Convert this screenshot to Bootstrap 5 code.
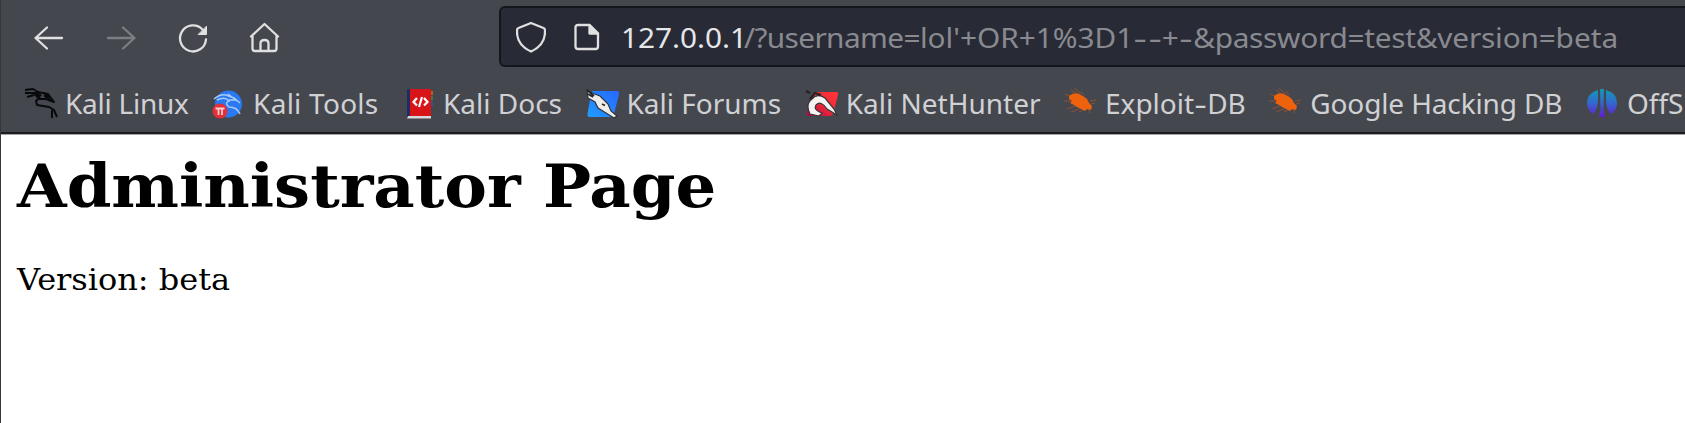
<!DOCTYPE html>
<html lang="en">
<head>
<meta charset="utf-8">
<title>Administrator Page</title>
<link href="https://cdn.jsdelivr.net/npm/bootstrap@5.3.0/dist/css/bootstrap.min.css" rel="stylesheet">
<style>
body{height:423px;overflow:hidden;background:#fff;border-left:1px solid #36373b}
.chrome{background:#45474f;border-bottom:2px solid #1b1c20;box-shadow:0 1px 0 #a5a6a8;font-family:"Noto Sans",sans-serif;font-size:28px;line-height:36px;color:#d0d1d3;height:134px}
.toolbar-row{height:74px;padding-left:28px}
.tool-buttons{gap:32px;padding-top:1px}
.tool-buttons svg{width:40px;height:40px;display:block}
.line-icon{fill:none;stroke:#e0e0e1;stroke-width:2.3;stroke-linecap:round;stroke-linejoin:round}
.address{height:61px;margin-left:214px;margin-top:-1px;background:#282a36;border:2px solid #15161b;border-right:0;border-radius:6px 0 0 6px;padding-left:15px}
.address svg{display:block}
.url{color:#898a90;transform:scaleX(1.063);transform-origin:left;margin-left:21px}
.host{color:#e6e6e9;margin-right:-3px}
.q-user{letter-spacing:-.55px}
.q-pass{letter-spacing:-.25px}
.q-version{letter-spacing:-.15px}
.bookmarks{height:58px;padding-left:23px;gap:23.5px}
.bookmarks svg{width:40px;height:36px;display:block}
.bookmarks span{padding-left:1px}
.dash{display:inline-block;transform:scaleX(1.4);margin:0 2.2px}
.bookmarks .dash{padding:0;margin:0 2px}
.doc{font-family:"DejaVu Serif",serif;color:#000;padding:17px 0 0 16px}
.doc h1{font-size:60px;line-height:70px;font-weight:700;margin-bottom:41px}
.doc p{font-size:30px;line-height:36px}
.doc h1,.doc p{transform:scaleX(1.066);transform-origin:left}
</style>
</head>
<body>
<svg width="0" height="0" class="position-absolute">
<defs>
<linearGradient id="blueFill" x1="1" y1="0" x2="0" y2="1"><stop offset="0" stop-color="#2668ff"/><stop offset="1" stop-color="#209cff"/></linearGradient>
<linearGradient id="redFill" x1="1" y1="0" x2="0" y2="1"><stop offset="0" stop-color="#ff3437"/><stop offset=".5" stop-color="#f02a38"/><stop offset="1" stop-color="#a80548"/></linearGradient>
<linearGradient id="offFill" x1="0" y1="0" x2="0" y2="1"><stop offset="0" stop-color="#109bb4"/><stop offset=".5" stop-color="#3268cf"/><stop offset="1" stop-color="#661bd1"/></linearGradient>
<symbol id="bug" viewBox="0 0 40 36">
<g stroke="#b9561f" stroke-opacity=".7" stroke-width=".9" fill="none"><path d="M8 12L1 9M8 16L0 16M11 21L3 24M15 24L7 27M13 9L7 5M17 9L10 3M20 10L17 6M26 16L32 15M27 19L31 18M24 24L26 28M19 25L15 27"/></g>
<path d="M5 11L9 8.500L14 8.500L19 11L23 14L25 18L28 21L27 25L23 24L21 26L17 24L13 22L10 20L6 18L8 16L5 14Z" fill="#ee620e"/>
</symbol>
</defs>
</svg>
<header class="chrome">
<div class="toolbar-row d-flex align-items-center">
<div class="tool-buttons d-flex flex-shrink-0">
<svg class="line-icon" viewBox="0 0 40 40"><path d="M33 20H6.500M18 9.500L6.500 20L18 30.500"/></svg>
<svg class="line-icon" viewBox="0 0 40 40" opacity=".36"><path d="M7 20H33.500M22 9.500L33.500 20L22 30.500"/></svg>
<svg class="line-icon" viewBox="0 0 40 40"><path d="M33 21.500A13 13 0 1 1 29.500 11.500"/><path d="M33.500 8.500V16.500H25.500Z" fill="#e0e0e1" stroke-width="1"/></svg>
<svg class="line-icon" viewBox="0 0 40 40"><path d="M6 18.500L19.500 6L33 18.500M7.500 17.500V30.500Q7.500 33 10 33H29Q31.500 33 31.500 30.500V17.500M15.500 33V25.500Q15.500 22 19.500 22Q23.500 22 23.500 25.500V33"/></svg>
</div>
<div class="address d-flex align-items-center flex-grow-1">
<svg class="line-icon flex-shrink-0" width="30" height="32" viewBox="0 0 30 32"><path d="M15 2L27.500 7Q29 7.500 29 9.500Q29.500 24 15 30.500Q.500 24 1 9.500Q1 7.500 2.500 7Z"/></svg>
<svg class="line-icon flex-shrink-0 ms-4 me-0" width="30" height="28" viewBox="-4 0 30 28"><path d="M4 2H15.500L24 10.500V23.500Q24 26 21.500 26H4Q1.500 26 1.500 23.500V4.500Q1.500 2 4 2Z"/><path d="M15.500 2V10.500H24Z" fill="#e0e0e1"/></svg>
<div class="url text-nowrap"><span class="host">127.0.0.1</span><span class="q-user">/?username=</span>lol'+OR+1%3D1<span class="dash">-</span><span class="dash">-</span>+<span class="dash">-</span><span class="q-pass">&amp;password=test</span><span class="q-version">&amp;version=</span>beta</div>
</div>
</div>
<nav class="bookmarks d-flex align-items-center text-nowrap">
<div class="d-flex flex-shrink-0" style="letter-spacing:-.25px">
<svg viewBox="0 0 40 36"><path d="M1 5L9 4L14 7L24 9L27 13L30 17L22 14L14 14L12 16L13 20L25 22L30 25L33 32M1 8L11 8L16 13M3 12L10 10M20 8L25 12M28 25L28 33" fill="none" stroke="#08090a" stroke-width="2" stroke-linejoin="round"/><path d="M12 6L18 10L14 14L10 10ZM20 8L29 16L20 12Z" fill="#08090a"/></svg>
<span>Kali Linux</span></div>
<div class="d-flex flex-shrink-0" style="letter-spacing:.25px">
<svg viewBox="0 0 40 36"><circle cx="16.500" cy="19" r="13.500" fill="#2879f2"/><path d="M2 14Q8 9 14 10L22 13L28 18M5 15Q13 11 17 16Q12 18 17 22Q25 22 28 29M16 9L25 16M17 15L25 15" fill="none" stroke="#a9caf7" stroke-width="1.500"/><circle cx="8" cy="26" r="7.500" fill="#e52e36"/><path d="M3.500 23.500H12.500M6.500 24V30M10 24V30" stroke="#f9cfd1" stroke-width="1.800"/></svg>
<span>Kali Tools</span></div>
<div class="d-flex flex-shrink-0">
<svg viewBox="0 0 40 36"><path d="M5 4H9V33H5Z" fill="#202b61"/><path d="M8 4H29V31H8Z" fill="#d91418"/><path d="M6 31H29V33.500H5Z" fill="#d9d6dc"/><path d="M29 6h2v4h-2z" fill="#b06420"/><path d="M29 11h2v4h-2z" fill="#387c42"/><path d="M29 16h2v5h-2z" fill="#33568c"/><path d="M15 13L11.500 17L15 20.500M22 13L25.500 17L22 20.500M20 12L17 22" fill="none" stroke="#fff" stroke-width="2.200"/></svg>
<span>Kali Docs</span></div>
<div class="d-flex flex-shrink-0">
<svg viewBox="0 0 40 36"><path d="M8 6H31Q34 6 33 9L28 29Q27 32 25 32H4Q1 32 1.500 29L5 9Q5 6 8 6Z" fill="url(#blueFill)"/><path d="M1 5L6 8L14 11L22 19L25 26L31 31L28 33L20 28L12 23L9 17L2 13Z" fill="#eeedea" stroke="#30333a" stroke-width="1.200"/><path d="M1 5L8 11M2 9L7 12M16 19L19 20.500" stroke="#25282c" stroke-width="1.800"/></svg>
<span>Kali Forums</span></div>
<div class="d-flex flex-shrink-0">
<svg viewBox="0 0 40 36"><path d="M10 7H31Q34 7 33 10L28 29Q27 31 25 31H4Q1 31 2 27L6 14Z" fill="url(#redFill)"/><path d="M5 29Q0 19 7 14Q12 8 20 13L29 24L32 30L22 24Q16 15 11 20Q8 25 17 28L14 31Z" fill="#f5f2f2" stroke="#34343a" stroke-width="1.200"/><path d="M1 6L5 8M5 14L10 8L16 10" stroke="#202226" stroke-width="2" fill="none"/></svg>
<span>Kali NetHunter</span></div>
<div class="d-flex flex-shrink-0"><svg><use href="#bug"/></svg><span>Exploit<span class="dash">-</span>DB</span></div>
<div class="d-flex flex-shrink-0" style="letter-spacing:-.13px"><svg><use href="#bug"/></svg><span>Google Hacking DB</span></div>
<div class="d-flex flex-shrink-0">
<svg viewBox="0 0 40 36"><path d="M12 5V14Q12 25 7 29Q1 25 1 18Q1 8 12 5ZM20 5Q31 8 31 18Q31 25 25 29Q20 25 20 14ZM14 4H18L17.500 25L19 32H13L14.500 25Z" fill="url(#offFill)"/></svg>
<span>OffS</span></div>
</nav>
</header>
<main class="doc">
<h1 class="d-table">Administrator Page</h1>
<p class="d-table mb-0">Version: beta</p>
</main>
<script src="https://cdn.jsdelivr.net/npm/bootstrap@5.3.0/dist/js/bootstrap.bundle.min.js"></script>
</body>
</html>
